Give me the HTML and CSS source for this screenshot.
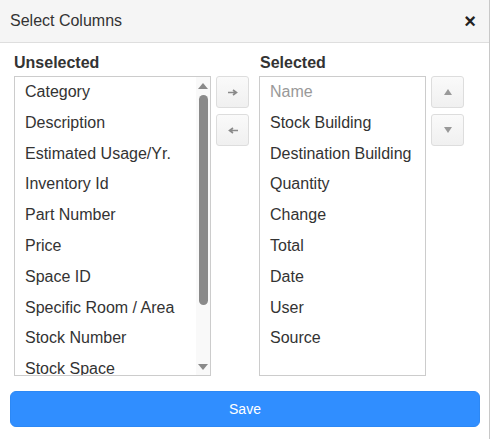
FILE: index.html
```html
<!DOCTYPE html>
<html>
<head>
    <title>Select Columns</title>
    <link rel="stylesheet" href="styles.css">
</head>
<body>
    <div class="modal">
        <div class="modal-header">
            <span class="modal-title">Select Columns</span>
            <span class="close">&times;</span>
        </div>

        <div class="modal-body">
            <div class="columns">
                <!-- Unselected -->
                <div class="col col-left">
                    <div class="col-label">Unselected</div>
                    <div class="list-box">
                        <div class="list-items">
                            <div class="item">Category</div>
                            <div class="item">Description</div>
                            <div class="item">Estimated Usage/Yr.</div>
                            <div class="item">Inventory Id</div>
                            <div class="item">Part Number</div>
                            <div class="item">Price</div>
                            <div class="item">Space ID</div>
                            <div class="item">Specific Room / Area</div>
                            <div class="item">Stock Number</div>
                            <div class="item">Stock Space</div>
                        </div>
                        <div class="scrollbar">
                            <div class="tri tri-up"></div>
                            <div class="thumb"></div>
                            <div class="tri tri-down"></div>
                        </div>
                    </div>
                </div>

                <div class="btn-stack move-btns">
                    <button class="side-btn">
                        <svg width="10" height="7" viewBox="0 0 10 7"><path d="M0 3.5H7M5 1L8.5 3.5L5 6" stroke="#8a8a8a" stroke-width="1.6" fill="none"/></svg>
                    </button>
                    <button class="side-btn">
                        <svg width="10" height="7" viewBox="0 0 10 7"><path d="M10 3.5H3M5 1L1.5 3.5L5 6" stroke="#8a8a8a" stroke-width="1.6" fill="none"/></svg>
                    </button>
                </div>

                <!-- Selected -->
                <div class="col col-right">
                    <div class="col-label">Selected</div>
                    <div class="list-box">
                        <div class="list-items">
                            <div class="item disabled">Name</div>
                            <div class="item">Stock Building</div>
                            <div class="item">Destination Building</div>
                            <div class="item">Quantity</div>
                            <div class="item">Change</div>
                            <div class="item">Total</div>
                            <div class="item">Date</div>
                            <div class="item">User</div>
                            <div class="item">Source</div>
                        </div>
                    </div>
                </div>

                <div class="btn-stack order-btns">
                    <button class="side-btn"><span class="tri-sm tri-sm-up"></span></button>
                    <button class="side-btn"><span class="tri-sm tri-sm-down"></span></button>
                </div>
            </div>

            <button class="save-btn">Save</button>
        </div>
    </div>
</body>
</html>
```

FILE: styles.css
```css
body {
    margin: 0;
    font-family: "Liberation Sans", Arial, sans-serif;
    color: #333;
    background: #fff;
}
.modal {
    width: 489px;
    height: 439px;
    border-right: 1px solid #c8c8c8;
    background: #fff;
}
.modal-header {
    height: 42px;
    background: #f5f5f5;
    border-bottom: 1px solid #dedede;
    display: flex;
    align-items: center;
    justify-content: space-between;
    padding: 0 13px 0 10px;
}
.modal-title { font-size: 16px; }
.close {
    font-size: 20px;
    font-weight: bold;
    line-height: 1;
    color: #222;
    margin-top: -1px;
}
.modal-body { padding-top: 11px; }
.columns { display: flex; }
.col-label {
    font-size: 16px;
    font-weight: bold;
    line-height: 18px;
    margin-bottom: 4px;
}
.col-left { margin-left: 14px; width: 197px; }
.col-right { margin-left: 10px; width: 167px; }
.col-right .col-label { padding-left: 1px; }
.list-box {
    height: 298px;
    border: 1px solid #ccc;
    display: flex;
    overflow: hidden;
}
.list-items { flex: 1; padding-left: 10px; }
.item {
    font-size: 16px;
    line-height: 30.8px;
    height: 30.8px;
    white-space: nowrap;
}
.item.disabled { color: #999; }
.scrollbar {
    width: 14px;
    background: #f9f9f9;
    display: flex;
    flex-direction: column;
    align-items: center;
    padding: 6px 0 5px;
    box-sizing: border-box;
}
.tri { width: 0; height: 0; border-left: 5px solid transparent; border-right: 5px solid transparent; }
.tri-up { border-bottom: 6px solid #8a8a8a; }
.tri-down { border-top: 6px solid #8a8a8a; margin-top: auto; }
.thumb {
    width: 9px;
    height: 210px;
    margin-top: 6px;
    background: #8a8a8a;
    border-radius: 5px;
}
.btn-stack {
    display: flex;
    flex-direction: column;
    gap: 6px;
    margin-top: 22px;
}
.move-btns { margin-left: 5px; }
.order-btns { margin-left: 5px; }
.side-btn {
    width: 33px;
    height: 32px;
    padding: 0;
    border: 1px solid #ddd;
    border-radius: 3px;
    background: linear-gradient(#fafafa, #f0f0f0);
    display: flex;
    align-items: center;
    justify-content: center;
}
.tri-sm { width: 0; height: 0; border-left: 4px solid transparent; border-right: 4px solid transparent; }
.tri-sm-up { border-bottom: 6px solid #999; }
.tri-sm-down { border-top: 6px solid #999; }
.save-btn {
    display: block;
    margin: 15px 0 0 10px;
    width: 470px;
    height: 36px;
    border: 1px solid #2c88f5;
    border-radius: 6px;
    background: #308eff;
    color: #fff;
    font-family: "Liberation Sans", Arial, sans-serif;
    font-size: 14px;
}
```
